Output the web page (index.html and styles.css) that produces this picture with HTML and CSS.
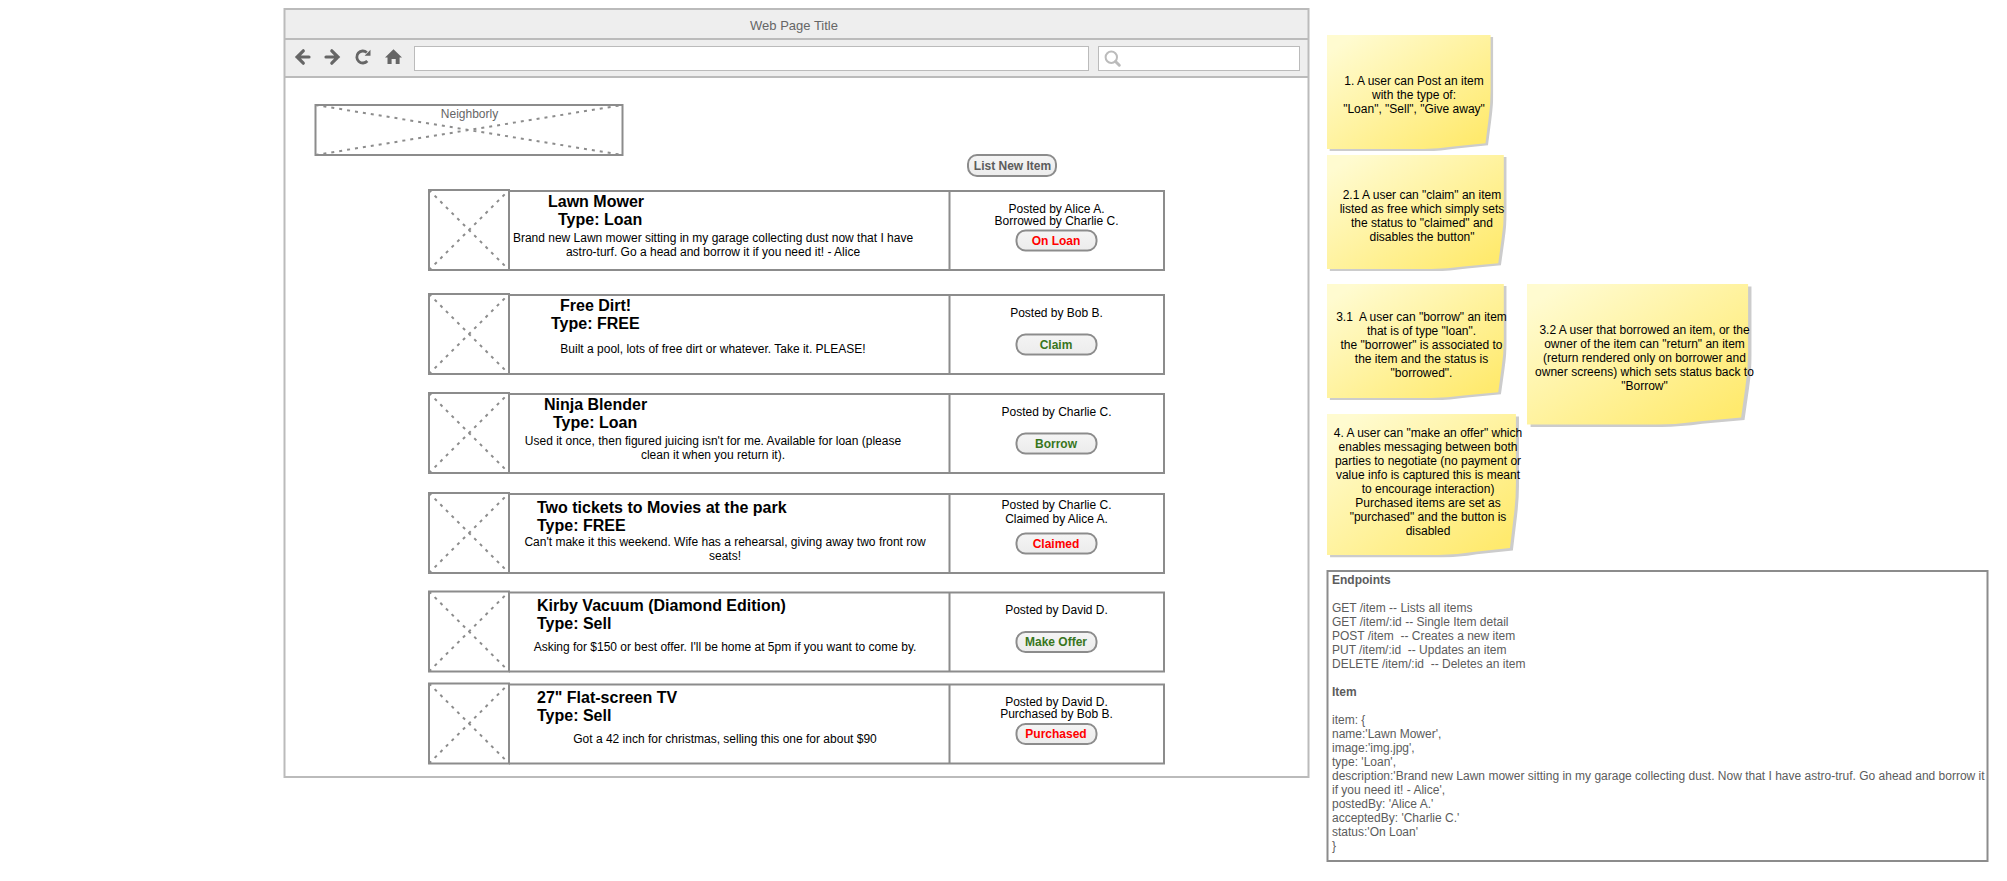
FILE: index.html
```html
<!DOCTYPE html>
<html lang="en">
<head>
<meta charset="utf-8">
<title>Neighborly wireframe</title>
<link rel="stylesheet" href="styles.css">
</head>
<body>
<svg class="defs" width="0" height="0" aria-hidden="true">
  <defs>
    <linearGradient id="paper" x1="0" y1="0" x2="1" y2="1">
      <stop offset="0.08" stop-color="#fffbd0"/>
      <stop offset="0.92" stop-color="#ffea6e"/>
    </linearGradient>
    <g id="frame" fill="none" stroke="#8c8c8c" stroke-width="2">
      <path d="M81 2H736V81H81M521.5 2V81"/>
      <rect x="1" y="1" width="80" height="80"/>
      <path stroke-dasharray="3 5" d="M1 1L81 81M1 81L81 1"/>
    </g>
    <symbol id="note" viewBox="0 0 100 100" preserveAspectRatio="none">
      <path fill="#ccc" d="M1.6 1.7H100V50Q100 60 98.8 73L96.8 95.1L78 97.8Q68 100 60 100H1.6Z"/>
      <path fill="url(#paper)" d="M0 0H98.4V48Q98.4 60 97.2 72L95.3 93.4L76 96.2Q67 98.3 58 98.3H0Z"/>
    </symbol>
  </defs>
</svg>
<main class="board">
  <section class="window">
    <svg class="window-frame" width="1027" height="770" aria-hidden="true">
      <rect x="1.5" y="1" width="1024" height="68" fill="#eee"/>
      <path d="M1.5 1H1025.5V769H1.5ZM.5 31H1026.5M.5 69H1026.5" fill="none" stroke="#bbb" stroke-width="2"/>
    </svg>
    <div class="window-body">
      <header class="titlebar">Web Page Title</header>
      <nav class="toolbar">
        <svg class="nav-icons" width="108" height="16" viewBox="0 0 108 16" fill="none" stroke="#666" stroke-width="3.2">
          <path d="M2 8H14M8.3 1.8L2.1 8L8.3 14.2" stroke-linecap="round"/>
          <path d="M31 8H43M36.8 1.8L43 8L36.8 14.2" stroke-linecap="round"/>
          <path d="M72.3 12A6 6 0 1 1 71.8 3.5" stroke-width="2.8"/>
          <path d="M75.5 .8V6.7H69.6Z" fill="#666" stroke="none"/>
          <path d="M98.5 .2L107 8.6H104.6V15H100.7V10H96.6V15H92.5V8.6H90Z" fill="#666" stroke="none"/>
        </svg>
        <div class="field url"></div>
        <div class="field search">
          <svg width="18" height="18" viewBox="0 0 18 18" fill="none" stroke="#bbb">
            <circle cx="7.3" cy="7.3" r="5.7" stroke-width="2"/>
            <path d="M11.5 11.5L15.3 15.2" stroke-width="3" stroke-linecap="round"/>
          </svg>
        </div>
      </nav>
      <div class="content">
        <div class="logo">
          <svg width="309" height="52" fill="none" stroke="#8c8c8c" stroke-width="2" aria-hidden="true">
            <rect x="1.5" y="1" width="307" height="50"/>
            <path stroke-dasharray="3 5" d="M1.5 1L308.5 51M1.5 51L308.5 1"/>
          </svg>
          <span>Neighborly</span>
        </div>
        <button class="btn list-new">List New Item</button>

        <article class="card lawn">
          <svg class="card-frame" width="737" height="82"><use href="#frame"/></svg>
          <div class="info">
            <h2><span>Lawn Mower</span><span class="type">Type: Loan</span></h2>
            <p>Brand new Lawn mower sitting in my garage collecting dust now that I have<br>astro-turf. Go a head and borrow it if you need it! - Alice</p>
          </div>
          <div class="status">
            <p class="close">Posted by Alice A.<br>Borrowed by Charlie C.</p>
            <button class="btn taken">On Loan</button>
          </div>
        </article>

        <article class="card dirt">
          <svg class="card-frame" width="737" height="82"><use href="#frame"/></svg>
          <div class="info">
            <h2><span>Free Dirt!</span><span class="type">Type: FREE</span></h2>
            <p>Built a pool, lots of free dirt or whatever. Take it. PLEASE!</p>
          </div>
          <div class="status">
            <p>Posted by Bob B.</p>
            <button class="btn open">Claim</button>
          </div>
        </article>

        <article class="card blender">
          <svg class="card-frame" width="737" height="82"><use href="#frame"/></svg>
          <div class="info">
            <h2><span>Ninja Blender</span><span class="type">Type: Loan</span></h2>
            <p>Used it once, then figured juicing isn't for me. Available for loan (please<br>clean it when you return it).</p>
          </div>
          <div class="status">
            <p>Posted by Charlie C.</p>
            <button class="btn open">Borrow</button>
          </div>
        </article>

        <article class="card wide tickets">
          <svg class="card-frame" width="737" height="82"><use href="#frame"/></svg>
          <div class="info">
            <h2><span>Two tickets to Movies at the park</span><span class="type">Type: FREE</span></h2>
            <p>Can't make it this weekend. Wife has a rehearsal, giving away two front row<br>seats!</p>
          </div>
          <div class="status">
            <p>Posted by Charlie C.<br>Claimed by Alice A.</p>
            <button class="btn taken">Claimed</button>
          </div>
        </article>

        <article class="card wide vacuum">
          <svg class="card-frame" width="737" height="82"><use href="#frame" y=".5"/></svg>
          <div class="info">
            <h2><span>Kirby Vacuum (Diamond Edition)</span><span class="type">Type: Sell</span></h2>
            <p>Asking for $150 or best offer. I'll be home at 5pm if you want to come by.</p>
          </div>
          <div class="status">
            <p>Posted by David D.</p>
            <button class="btn open">Make Offer</button>
          </div>
        </article>

        <article class="card wide tv">
          <svg class="card-frame" width="737" height="82"><use href="#frame" y=".5"/></svg>
          <div class="info">
            <h2><span>27" Flat-screen TV</span><span class="type">Type: Sell</span></h2>
            <p>Got a 42 inch for christmas, selling this one for about $90</p>
          </div>
          <div class="status">
            <p class="close">Posted by David D.<br>Purchased by Bob B.</p>
            <button class="btn taken">Purchased</button>
          </div>
        </article>
      </div>
    </div>
  </section>

  <aside class="side">
    <div class="notes">
      <div class="note post"><svg width="166.3" height="116"><use href="#note"/></svg>
        <p>1. A user can Post an item<br>with the type of:<br>"Loan", "Sell", "Give away"</p></div>
      <div class="note claim"><svg width="179.7" height="116"><use href="#note"/></svg>
        <p>2.1 A user can "claim" an item<br>listed as free which simply sets<br>the status to "claimed" and<br>disables the button"</p></div>
      <div class="note borrow"><svg width="179.7" height="116"><use href="#note"/></svg>
        <p>3.1&nbsp; A user can "borrow" an item<br>that is of type "loan".<br>the "borrower" is associated to<br>the item and the status is<br>"borrowed".</p></div>
      <div class="note return"><svg width="224.7" height="143"><use href="#note"/></svg>
        <p>3.2 A user that borrowed an item, or the<br>owner of the item can "return" an item<br>(return rendered only on borrower and<br>owner screens) which sets status back to<br>"Borrow"</p></div>
      <div class="note offer"><svg width="192" height="143.5"><use href="#note"/></svg>
        <p>4. A user can "make an offer" which<br>enables messaging between both<br>parties to negotiate (no payment or<br>value info is captured this is meant<br>to encourage interaction)<br>Purchased items are set as<br>"purchased" and the button is<br>disabled</p></div>
    </div>
    <section class="api">
      <svg width="662" height="292" fill="none" stroke="#8c8c8c" stroke-width="2" aria-hidden="true"><rect x=".5" y="1" width="660" height="290"/></svg>
      <div class="api-text"><b>Endpoints</b>

GET /item -- Lists all items
GET /item/:id -- Single Item detail
POST /item&nbsp; -- Creates a new item
PUT /item/:id&nbsp; -- Updates an item
DELETE /item/:id&nbsp; -- Deletes an item

<b>Item</b>

item: {
name:'Lawn Mower',
image:'img.jpg',
type: 'Loan',
description:'Brand new Lawn mower sitting in my garage collecting dust. Now that I have astro-truf. Go ahead and borrow it
if you need it! - Alice',
postedBy: 'Alice A.'
acceptedBy: 'Charlie C.'
status:'On Loan'
}</div>
    </section>
  </aside>
</main>
</body>
</html>
```
FILE: styles.css
```css
* { box-sizing: border-box; }
body {
  margin: 0;
  background: #fff;
  color: #000;
  font: 12px/14px "Liberation Sans", Arial, sans-serif;
}
h2, p { margin: 0; }
svg { display: block; overflow: visible; }
.defs { position: absolute; }

.board {
  display: flex;
  width: 2007px;
  height: 881px;
  padding: 8px 0 0 283px;
  overflow: hidden;
}

/* Browser window */
.window { display: grid; width: 1027px; height: 770px; }
.window-frame, .window-body { grid-area: 1 / 1; }
.titlebar {
  height: 31px;
  padding: 10px 5px 0 0;
  color: #666;
  font-size: 13px;
  line-height: 15px;
  text-align: center;
}
.toolbar { display: flex; align-items: flex-start; height: 39px; padding: 7px 0 0 12px; }
.nav-icons { margin-top: 3px; }
.field { height: 25px; border: 1px solid #bbb; background: #fff; }
.url { width: 675px; margin-left: 11px; }
.search { width: 202px; margin-left: 9px; padding: 3px 0 0 5px; }

.content { display: flex; flex-direction: column; align-items: flex-start; padding-top: 26px; }
.logo { display: grid; width: 309px; height: 52px; margin-left: 31px; color: #666; text-align: center; }
.logo > * { grid-area: 1 / 1; }
.logo span { padding: 3px 0 0 2px; }

/* Buttons */
.btn {
  height: 22px;
  padding: 0;
  border: 2px solid #8c8c8c;
  border-radius: 10px;
  background: linear-gradient(#f4f4f4, #ececec);
  font: bold 12px/14px "Liberation Sans", Arial, sans-serif;
  text-align: center;
  white-space: nowrap;
}
.list-new { width: 90px; height: 23px; margin: -2px 0 12px 684px; padding-left: 1px; color: #5c5c5c; }
.taken { color: #f00; }
.open { color: #38761d; }

/* Item cards */
.card {
  display: grid;
  grid-template-columns: 82px 439px 215px;
  width: 737px;
  height: 82px;
  margin-left: 145px;
}
.card-frame { grid-area: 1 / 1 / 2 / -1; }
.info { grid-area: 1 / 2; padding-top: 4px; }
.info h2 { display: flex; flex-direction: column; font-size: 16px; line-height: 18px; }
.info p { width: 406px; margin-top: 2px; text-align: center; white-space: nowrap; }
.wide .info { padding-top: 7px; }
.wide h2 { padding-left: 27px; }
.wide .info p { width: 430px; }
.lawn h2 { padding-left: 38px; }
.lawn .type { padding-left: 10px; }
.dirt { margin-top: 22px; }
.dirt h2 { padding-left: 41px; }
.dirt h2 span:first-child { padding-left: 9px; }
.dirt .info p { margin-top: 9px; }
.blender { margin-top: 17px; }
.blender h2 { padding-left: 34px; }
.blender .type { padding-left: 9px; }
.tickets { margin-top: 18px; }
.tickets .info p { margin-top: 0; }
.vacuum { margin-top: 16px; }
.tv { margin-top: 10px; }
.vacuum .info p, .tv .info p { margin-top: 7px; }

.status { grid-area: 1 / 3; display: flex; flex-direction: column; align-items: center; text-align: center; }
.status p { height: 40px; padding-top: 13px; }
.status .close { padding-top: 14px; line-height: 12px; }
.tickets .status p { padding-top: 6px; }
.status .btn { width: 82px; transform: translate(-0.5px, 0.5px); }
.vacuum .btn, .tv .btn { transform: translate(-0.5px, 1px); }

/* Sticky notes */
.side { margin: 27px 0 0 17px; }
.notes {
  display: grid;
  grid-template-columns: 200px 225px;
  grid-template-rows: 120px 129px 130px 156px;
}
.note { display: grid; grid-column: 1; align-items: start; justify-content: start; }
.note > * { grid-area: 1 / 1; }
.note p { text-align: center; white-space: nowrap; }
.post p { width: 174px; padding-top: 39px; }
.claim p { width: 190px; padding-top: 33px; }
.borrow { grid-row: 3; }
.borrow p { width: 189px; padding-top: 26px; }
.return { grid-area: 3 / 2 / 5 / 3; }
.return p { width: 235px; padding-top: 39px; }
.offer { grid-row: 4; }
.offer p { width: 202px; padding-top: 12px; }

/* API panel */
.api { display: grid; width: 662px; height: 292px; color: #5c5c5c; }
.api > * { grid-area: 1 / 1; }
.api-text { padding: 3px 0 0 5px; white-space: pre; }
```
